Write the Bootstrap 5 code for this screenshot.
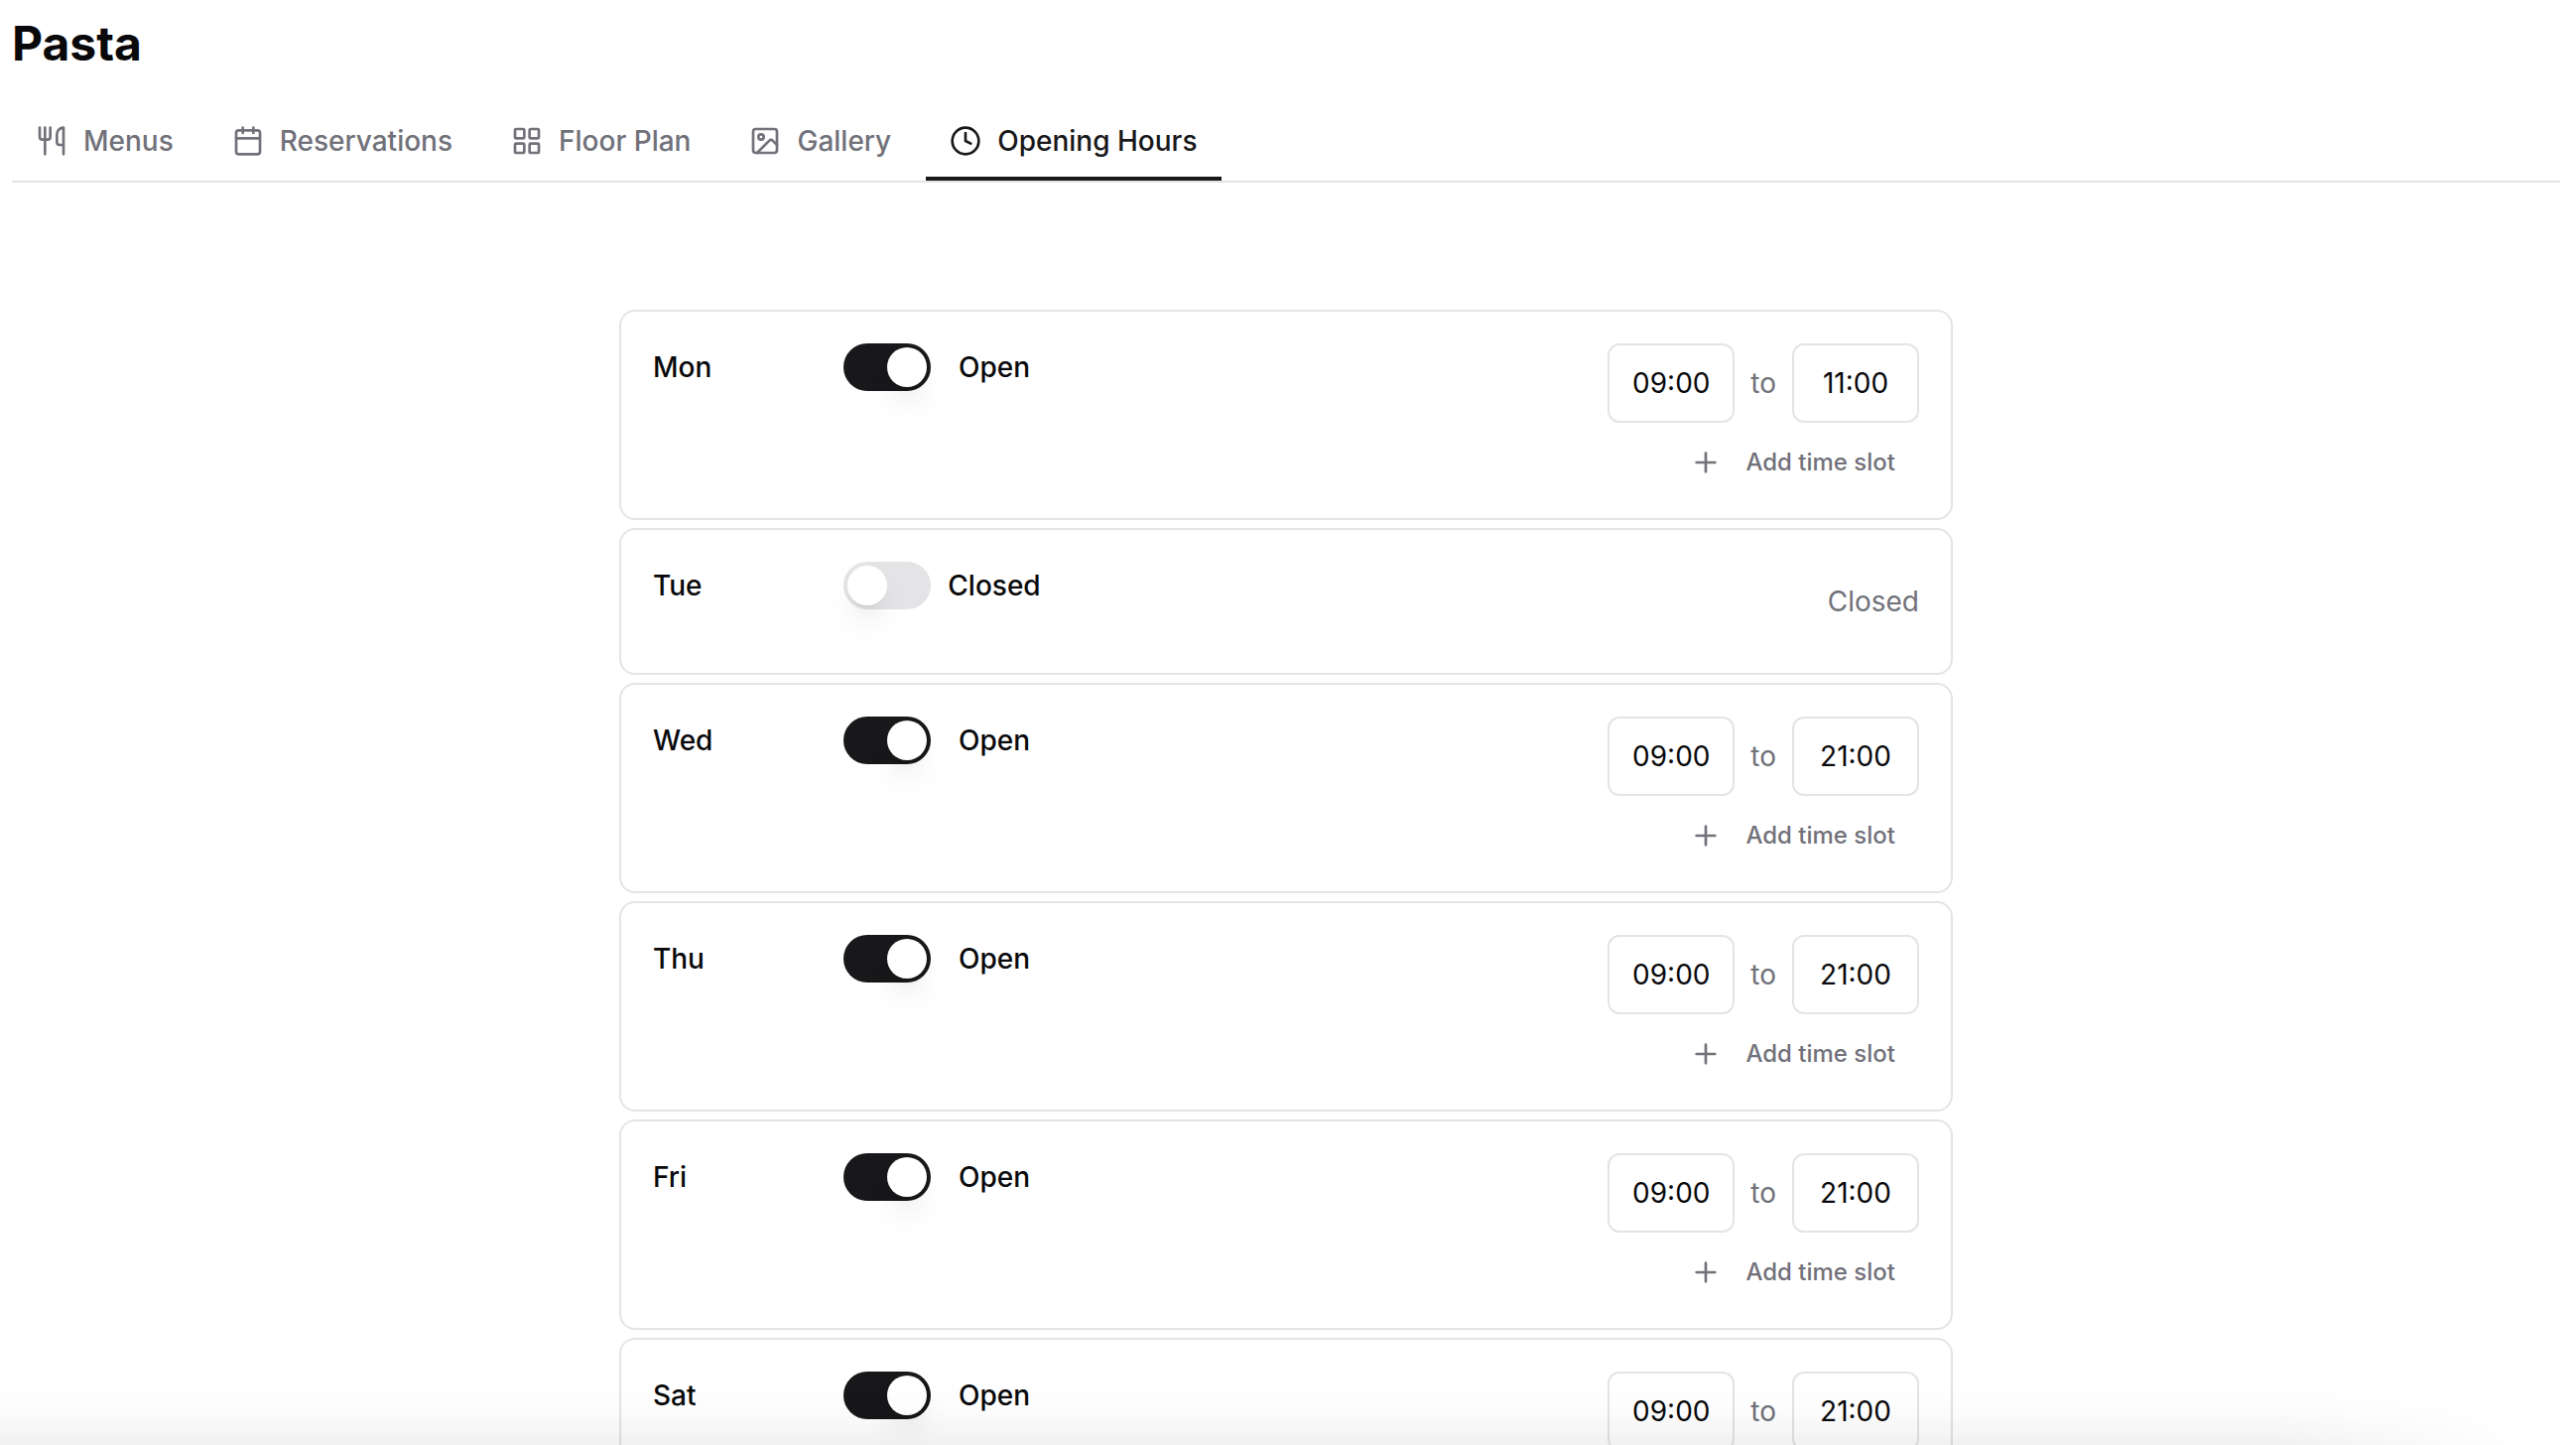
<!DOCTYPE html>
<html lang="en">
<head>
<meta charset="utf-8">
<meta name="viewport" content="width=device-width, initial-scale=1">
<title>Pasta – Opening Hours</title>
<link href="https://cdn.jsdelivr.net/npm/bootstrap@5.3.0/dist/css/bootstrap.min.css" rel="stylesheet">
<style>
  :root { --ink: #09090b; --ink-strong: #18181b; --soft: #71717a; --line: #e4e4e7; }
  body { font-family: Inter, "Liberation Sans", sans-serif; font-size: 28px; line-height: 40px; color: var(--ink); background: #fff; }
  .page { padding: 16px 16px 0 12px; }
  .page-title { font-size: 48px; line-height: 56px; font-weight: 700; }
  svg { fill: none; stroke: currentColor; stroke-width: 2; stroke-linecap: round; stroke-linejoin: round; flex: none; }
  .tabs { gap: 11px; margin-top: 28px; border-bottom: 2px solid var(--line); --bs-nav-link-color: var(--soft); --bs-nav-link-hover-color: var(--ink-strong); }
  .tabs .nav-link { display: flex; align-items: center; gap: 16px; height: 82px; padding: 6px 24px 0; border-bottom: 4px solid transparent; font-size: 28px; font-weight: 500; }
  .tabs .nav-link.active { color: var(--ink-strong); border-color: var(--ink-strong); }
  .hours { max-width: 1344px; margin: 128px auto 0; }
  .day { border: 2px solid var(--line); border-radius: 16px; padding: 32px; }
  .day-name { width: 192px; line-height: 48px; font-weight: 500; }
  .day-state { height: 48px; }
  .day-state .form-check-input { width: 88px; height: 48px; margin: 0; border: 0; border-radius: 24px; background: var(--line); position: relative; box-shadow: none; cursor: pointer; }
  .day-state .form-check-input::after { content: ""; display: block; width: 40px; height: 40px; margin: 4px; border-radius: 50%; background: #fff; box-shadow: 0 20px 30px -6px rgba(0,0,0,.1), 0 8px 12px -8px rgba(0,0,0,.1); }
  .day-state .form-check-input:checked { background: var(--ink-strong); }
  .day-state .form-check-input:checked::after { margin-left: 44px; }
  .state-label { width: 108px; margin-left: 10px; text-align: center; font-weight: 500; }
  .slots { margin-left: auto; }
  .time-box { width: 128px; height: 80px; padding: 0; border: 2px solid var(--line); border-radius: 12px; font-size: 28px; text-align: center; color: var(--ink); background: transparent; }
  .add-btn { --bs-btn-color: var(--soft); display: flex; align-items: center; gap: 24px; height: 48px; margin-top: 16px; padding: 0 24px; border: 0; font-size: 24px; font-weight: 500; }
  .closed-note { height: 80px; line-height: 80px; color: var(--soft); }
  .quiet { color: var(--soft); }
  .bottom-shade { height: 64px; pointer-events: none; background: linear-gradient(to bottom, rgba(0,0,0,0), rgba(0,0,0,.012) 45%, rgba(0,0,0,.055)); -webkit-mask-image: linear-gradient(to right, #000 88%, transparent 98%); mask-image: linear-gradient(to right, #000 88%, transparent 98%); }
</style>
</head>
<body class="vh-100 overflow-hidden">
<main class="page">
  <h1 class="page-title mb-0">Pasta</h1>
  <nav class="nav tabs" aria-label="Restaurant sections">
    <a class="nav-link" href="#menus"><svg width="32" height="32" viewBox="0 0 24 24"><path d="M3 2v7c0 1.1.9 2 2 2h4a2 2 0 0 0 2-2V2M7 2v20M21 15V2a5 5 0 0 0-5 5v6c0 1.1.9 2 2 2h3Zm0 0v7"/></svg>Menus</a>
    <a class="nav-link" href="#reservations"><svg width="32" height="32" viewBox="0 0 24 24"><path d="M8 2v4M16 2v4M3 10h18"/><rect x="3" y="4" width="18" height="18" rx="2"/></svg>Reservations</a>
    <a class="nav-link" href="#floor"><svg width="32" height="32" viewBox="0 0 24 24"><rect x="3" y="3" width="7" height="7" rx="1"/><rect x="14" y="3" width="7" height="7" rx="1"/><rect x="14" y="14" width="7" height="7" rx="1"/><rect x="3" y="14" width="7" height="7" rx="1"/></svg>Floor Plan</a>
    <a class="nav-link" href="#gallery"><svg width="32" height="32" viewBox="0 0 24 24"><rect x="3" y="3" width="18" height="18" rx="2"/><circle cx="9" cy="9" r="2"/><path d="m21 15-3.086-3.086a2 2 0 0 0-2.828 0L6 21"/></svg>Gallery</a>
    <a class="nav-link active" aria-current="page" href="#hours"><svg width="32" height="32" viewBox="0 0 24 24"><circle cx="12" cy="12" r="10"/><path d="M12 6v6l4 2"/></svg>Opening Hours</a>
  </nav>
  <form class="hours d-flex flex-column gap-2" id="hours"></form>
</main>
<div class="bottom-shade fixed-bottom"></div>
<script>
  const days = [['Mon','09:00','11:00'],['Tue'],['Wed','09:00','21:00'],['Thu','09:00','21:00'],['Fri','09:00','21:00'],['Sat','09:00','21:00']];
  document.getElementById('hours').innerHTML = days.map(([day, from, to]) => `
    <section class="day d-flex align-items-start">
      <div class="day-name">${day}</div>
      <div class="day-state d-flex align-items-center">
        <input class="form-check-input" type="checkbox" role="switch" id="open-${day}" ${from ? 'checked' : ''}>
        <label class="state-label" for="open-${day}">${from ? 'Open' : 'Closed'}</label>
      </div>
      <div class="slots d-flex flex-column align-items-end">${from ? `
        <div class="d-flex align-items-center gap-3">
          <input class="time-box" type="text" value="${from}" aria-label="${day} opens at">
          <span class="quiet">to</span>
          <input class="time-box" type="text" value="${to}" aria-label="${day} closes at">
        </div>
        <button type="button" class="btn add-btn"><svg width="32" height="32" viewBox="0 0 24 24"><path d="M5 12h14M12 5v14"/></svg>Add time slot</button>` : `
        <div class="closed-note">Closed</div>`}
      </div>
    </section>`).join('');
</script>
<script src="https://cdn.jsdelivr.net/npm/bootstrap@5.3.0/dist/js/bootstrap.bundle.min.js"></script>
</body>
</html>
